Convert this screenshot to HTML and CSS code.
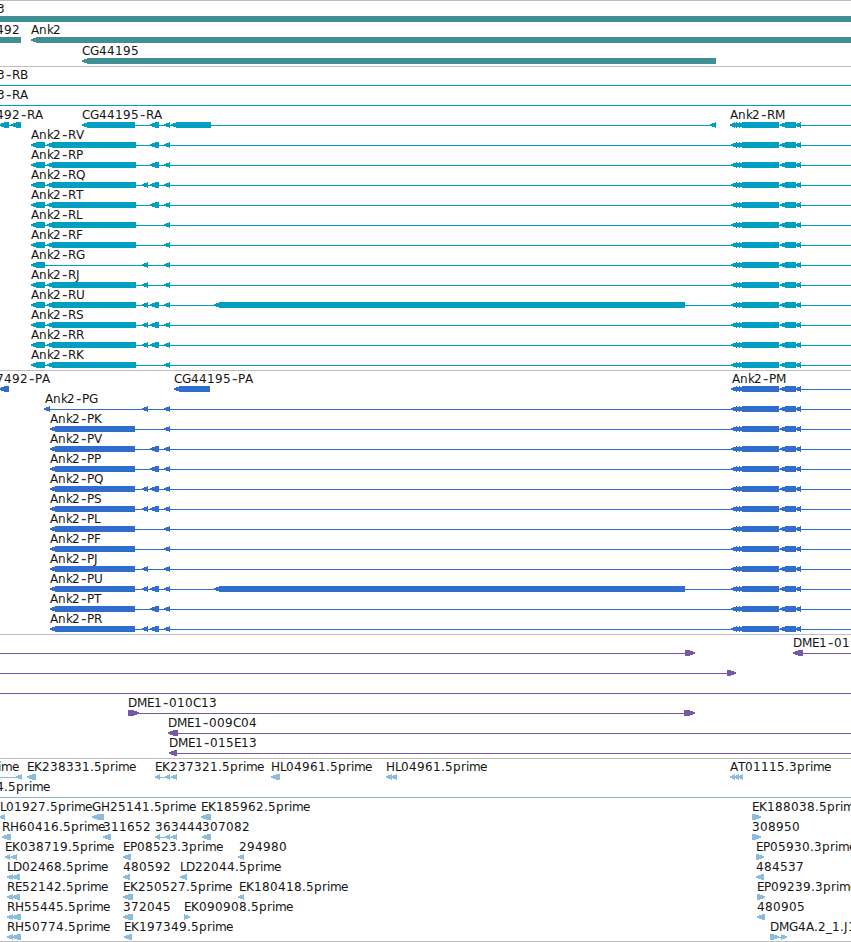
FILE: index.html
```
<!DOCTYPE html>
<html lang="en">
  <head>
    <meta charset="UTF-8" />
    <meta name="viewport" content="width=device-width, initial-scale=1.0" />
    <title>Ank2 region</title>
    <link rel="stylesheet" href="styles.css">
  </head>
  <body>
    <main class="browser">
      <section class="track genes" id="genes"></section>
      <section class="track transcripts" id="transcripts"></section>
      <section class="track cds" id="cds"></section>
      <section class="track bacs" id="bacs"></section>
      <section class="track ests" id="ests"></section>
    </main>
    <script src="script.js"></script>
  </body>
</html>
```
FILE: styles.css
```
body {
  margin: 0;
  background-color: #ffffff;
}

.browser {
  display: flex;
  flex-direction: column;
  width: 851px;
  height: 942px;
  overflow: hidden;
}

.track {
  display: flex;
  flex-direction: column;
  padding: 1px 0 2px;
  border-top: 1px solid #bebebe;
}

.row {
  display: block;
  flex: none;
  width: 851px;
  height: 20px;
  overflow: hidden;
  shape-rendering: crispEdges;
}

.label {
  fill: #141414;
  font-family: "DejaVu Sans", sans-serif;
  font-size: 12px;
  white-space: pre;
}

.dash {
  fill: #333333;
  font-size: 15px;
}

.genes {
  padding-bottom: 1px;
  color: #408f95;
}

.genes .row {
  height: 21px;
}

.transcripts {
  color: #009fc1;
}

.cds {
  color: #316dcc;
}

.bacs {
  color: #7658a6;
}

.ests {
  padding-bottom: 1px;
  border-bottom: 1px solid #bebebe;
  color: #8abcdd;
}

.line,
.shape {
  fill: currentColor;
}
```
FILE: script.js
```
const SVG = 'http://www.w3.org/2000/svg';
const END = 851;
const HEAD = 6;

// advance width of each character, in whole pixels
const ctx = document.createElement('canvas').getContext('2d');
ctx.font = '12px "DejaVu Sans"';
const narrow = { '-': 7, k: 6, m: 11, E: 7, L: 6 };
const advance = (ch) => narrow[ch] || Math.round(ctx.measureText(ch).width);

function add(parent, name, attrs) {
  const el = document.createElementNS(SVG, name);
  for (const key in attrs) el.setAttribute(key, attrs[key]);
  parent.appendChild(el);
  return el;
}

function drawLabel(svg, x, text) {
  const label = add(svg, 'text', { class: 'label', y: 11 });
  let pos = x;
  // the dash is set larger, so it gets its own span
  for (const part of text.split(/(-)/)) {
    if (!part) continue;
    const xs = [];
    for (const ch of part) {
      xs.push(pos);
      pos += advance(ch);
    }
    const attrs = { x: xs.join(' '), y: 11 };
    if (part === '-') {
      attrs.class = 'dash';
      attrs.x = pos - 6;
      attrs.y = 12;
    }
    add(label, 'tspan', attrs).textContent = part;
  }
}

// dir: '<' left arrow, '>' right arrow, '=' plain box
function drawShape(svg, [from, to, dir = '<']) {
  const head = Math.min(HEAD, to - from);
  let points;
  if (dir === '<') {
    points = `${from},16.5 ${from + head},14 ${to},14 ${to},20 ${from + head},20 ${from},17.8`;
  } else if (dir === '>') {
    points = `${from},14 ${to - head},14 ${to},16.5 ${to},17.8 ${to - head},20 ${from},20`;
  } else {
    points = `${from},14 ${to},14 ${to},20 ${from},20`;
  }
  add(svg, 'polygon', { class: 'shape', points });
}

// row: { t: labels, l: connector lines, s: shapes }
function drawTrack(id, rows) {
  const track = document.getElementById(id);
  for (const { t = [], l = [], s = [] } of rows) {
    const svg = add(track, 'svg', { class: 'row' });
    l.forEach(([a, b]) => add(svg, 'rect', { class: 'line', x: a, y: 17, width: b - a, height: 1 }));
    s.forEach((shape) => drawShape(svg, shape));
    t.forEach(([x, text]) => drawLabel(svg, x, text));
  }
}

drawTrack('genes', [
  { t: [[-3, '3']], s: [[0, END, '=']] },
  { t: [[-4, '492'], [31, 'Ank2']], s: [[0, 21, '='], [31, END + 9]] },
  { t: [[82, 'CG44195']], s: [[82, 716]] },
]);

// exons shared by the Ank2 isoforms
const fivePrime = [[731, 737], [734, 740], [737, 743], [742, 779, '='], [780, 796], [795, 801]];
const A = [142, 148];
const B = [150, 159];
const C = [164, 170];
const LONG = [214, 685];

function transcript(name, middle, body = true) {
  const s = [[31, 45], ...middle, C, ...fivePrime];
  if (body) s.push([47, 136]);
  return { t: [[31, name]], l: [[31, END]], s };
}

drawTrack('transcripts', [
  { t: [[-3, '3-RB']], l: [[0, END]] },
  { t: [[-3, '3-RA']], l: [[0, END]] },
  {
    t: [[-4, '492-RA'], [82, 'CG44195-RA'], [730, 'Ank2-RM']],
    l: [[0, 21], [82, 716], [730, END]],
    s: [[-1, 9], [11, 21], [82, 135], B, C, [171, 211], [710, 716], [730, 735], ...fivePrime],
  },
  transcript('Ank2-RV', [B]),
  transcript('Ank2-RP', [B]),
  transcript('Ank2-RQ', [A, B]),
  transcript('Ank2-RT', [B]),
  transcript('Ank2-RL', []),
  transcript('Ank2-RF', []),
  transcript('Ank2-RG', [A], false),
  transcript('Ank2-RJ', [A]),
  transcript('Ank2-RU', [A, B, LONG]),
  transcript('Ank2-RS', [A, B]),
  transcript('Ank2-RR', [A, B]),
  transcript('Ank2-RK', []),
]);

function protein(name, middle) {
  return { t: [[50, name]], l: [[50, END]], s: [[50, 135], ...middle, C, ...fivePrime] };
}

drawTrack('cds', [
  {
    t: [[-4, '7492-PA'], [174, 'CG44195-PA'], [732, 'Ank2-PM']],
    l: [[732, END]],
    s: [[-1, 9], [174, 210], ...fivePrime],
  },
  { t: [[45, 'Ank2-PG']], l: [[45, END]], s: [[44, 50], A, C, ...fivePrime] },
  protein('Ank2-PK', []),
  protein('Ank2-PV', [B]),
  protein('Ank2-PP', [B]),
  protein('Ank2-PQ', [A, B]),
  protein('Ank2-PS', [A, B]),
  protein('Ank2-PL', []),
  protein('Ank2-PF', []),
  protein('Ank2-PJ', [A]),
  protein('Ank2-PU', [A, B, LONG]),
  protein('Ank2-PT', [B]),
  protein('Ank2-PR', [A, B]),
]);

drawTrack('bacs', [
  { t: [[793, 'DME1-01']], l: [[0, 686], [800, END]], s: [[685, 695, '>'], [793, 803]] },
  { l: [[0, 728]], s: [[727, 736, '>']] },
  { l: [[0, END]] },
  { t: [[128, 'DME1-010C13']], l: [[130, 690]], s: [[128, 139, '>'], [684, 695, '>']] },
  { t: [[168, 'DME1-009C04']], l: [[170, END]], s: [[168, 178]] },
  { t: [[169, 'DME1-015E13']], l: [[170, END]], s: [[169, 177]] },
]);

drawTrack('ests', [
  {
    t: [[-2, 'ime'], [27, 'EK238331.5prime'], [155, 'EK237321.5prime'], [271, 'HL04961.5prime'], [386, 'HL04961.5prime'], [730, 'AT01115.3prime']],
    l: [[0, 18], [157, 175]],
    s: [[16, 22], [27, 36], [155, 160], [165, 170], [171, 177], [271, 280], [386, 392], [391, 397], [730, 735], [734, 739], [738, 743]],
  },
  { t: [[-4, '4.5prime']], l: [[0, END]] },
  {
    t: [[0, 'L01927.5prime'], [92, 'GH25141.5prime'], [201, 'EK185962.5prime'], [752, 'EK188038.5prime']],
    s: [[-1, 5], [92, 104], [201, 211], [752, 761, '>']],
  },
  {
    t: [[2, 'RH60416.5prime'], [103, '311652'], [155, '363444'], [202, '307082'], [752, '308950']],
    l: [[157, 175]],
    s: [[2, 11], [103, 111], [155, 160], [165, 170], [171, 177], [202, 211], [752, 761, '>']],
  },
  {
    t: [[5, 'EK038719.5prime'], [123, 'EP08523.3prime'], [239, '294980'], [756, 'EP05930.3prime']],
    l: [[6, 15]],
    s: [[5, 10], [11, 17], [123, 131], [238, 244], [756, 764, '>']],
  },
  {
    t: [[7, 'LD02468.5prime'], [123, '480592'], [180, 'LD22044.5prime'], [756, '484537']],
    s: [[7, 13], [12, 20], [123, 130], [180, 187], [756, 764]],
  },
  {
    t: [[7, 'RE52142.5prime'], [123, 'EK250527.5prime'], [239, 'EK180418.5prime'], [757, 'EP09239.3prime']],
    s: [[7, 13], [12, 20], [123, 133], [238, 244], [757, 765, '>']],
  },
  {
    t: [[7, 'RH55445.5prime'], [123, '372045'], [184, 'EK090908.5prime'], [757, '480905']],
    s: [[7, 13], [12, 21], [123, 133], [184, 190, '>'], [757, 765]],
  },
  {
    t: [[7, 'RH50774.5prime'], [124, 'EK197349.5prime'], [770, 'DMG4A.2_1.J1']],
    l: [[775, 785]],
    s: [[7, 13], [12, 21], [124, 132], [770, 779, '>'], [781, 787, '>']],
  },
]);
```
